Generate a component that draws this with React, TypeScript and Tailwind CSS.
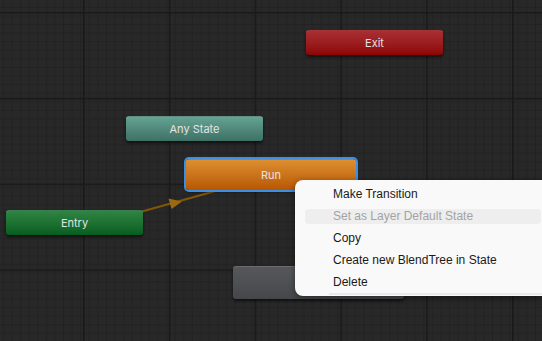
import React from "react";

type NodeProps = {
  label?: string;
  className: string;
};

// state node in the animator graph
const StateNode = ({ label, className }: NodeProps) => (
  <div
    className={`absolute flex items-center justify-center rounded-[3px] border-t border-white/20 shadow-[0_2px_3px_rgba(0,0,0,0.6)] text-[11px] text-[#e4e4e4] ${className}`}
    style={{ fontFamily: "Inter, 'Noto Sans', sans-serif" }}
  >
    {label}
  </div>
);

const menuItems = [
  { label: "Make Transition" },
  { label: "Set as Layer Default State", disabled: true },
  { label: "Copy" },
  { label: "Create new BlendTree in State" },
  { label: "Delete" },
];

const Grid = () => (
  <svg className="absolute inset-0" width="542" height="341">
    <defs>
      <pattern id="minor" x="-2.8" y="12" width="8.58" height="8.58" patternUnits="userSpaceOnUse">
        <path d="M0 0.5H8.58M0.5 0V8.58" stroke="#222222" strokeWidth="1" fill="none" />
      </pattern>
      <pattern id="major" x="-2.8" y="12" width="85.8" height="85.8" patternUnits="userSpaceOnUse">
        <rect width="85.8" height="85.8" fill="url(#minor)" />
        <path d="M0 0.75H85.8M0.75 0V85.8" stroke="#191919" strokeWidth="1.6" fill="none" />
      </pattern>
    </defs>
    <rect width="542" height="341" fill="#282828" />
    <rect width="542" height="341" fill="url(#major)" />
    {/* Entry -> Run transition */}
    <line x1="142" y1="211.5" x2="228" y2="187.5" stroke="#805608" strokeWidth="2" />
    <polygon points="182,201.5 168.5,198.5 171.5,209" fill="#9a6910" />
  </svg>
);

export default function App() {
  return (
    <div className="relative w-[542px] h-[341px] overflow-hidden bg-[#282828]">
      <Grid />

      <StateNode label="Exit" className="left-[306px] top-[30px] w-[137px] h-[25px] bg-gradient-to-b from-[#a82e33] to-[#8e0303]" />
      <StateNode label="Any State" className="left-[126px] top-[116px] w-[137px] h-[25px] bg-gradient-to-b from-[#64a393] to-[#3e7165]" />
      <StateNode label="Entry" className="left-[6px] top-[210px] w-[137px] h-[25px] bg-gradient-to-b from-[#2f8543] to-[#065d20]" />
      <StateNode className="left-[233px] top-[266px] w-[171px] h-[33px] bg-gradient-to-b from-[#57585c] to-[#46474b]" />
      <StateNode
        label="Run"
        className="left-[186px] top-[159px] w-[170px] h-[31px] bg-gradient-to-b from-[#dd8f2f] to-[#b75700] ring-2 ring-[#3b8fe4] shadow-[0_0_6px_3px_rgba(40,130,230,0.55)]"
      />

      {/* context menu */}
      <div
        className="absolute left-[295px] top-[180px] w-[247px] h-[116px] rounded-l-[8px] bg-[#f9f9f9] shadow-[0_2px_6px_rgba(0,0,0,0.45)] pt-[3px] flex flex-col"
        style={{ fontFamily: "'Liberation Sans', Arial, sans-serif" }}
      >
        {menuItems.map((item) => (
          <div key={item.label} className="relative h-[22px] flex items-center">
            {item.disabled && (
              <div className="absolute left-[10px] right-[1px] top-[4px] h-[15px] rounded-[4px] bg-[#eeeeee]" />
            )}
            <span className={`relative pl-[38px] text-[12px] ${item.disabled ? "text-[#a3a3a3]" : "text-[#1a1a1a]"}`}>
              {item.label}
            </span>
          </div>
        ))}
        <div className="ml-[34px] h-[2px] bg-[#e9e9e9]" />
      </div>
    </div>
  );
}
